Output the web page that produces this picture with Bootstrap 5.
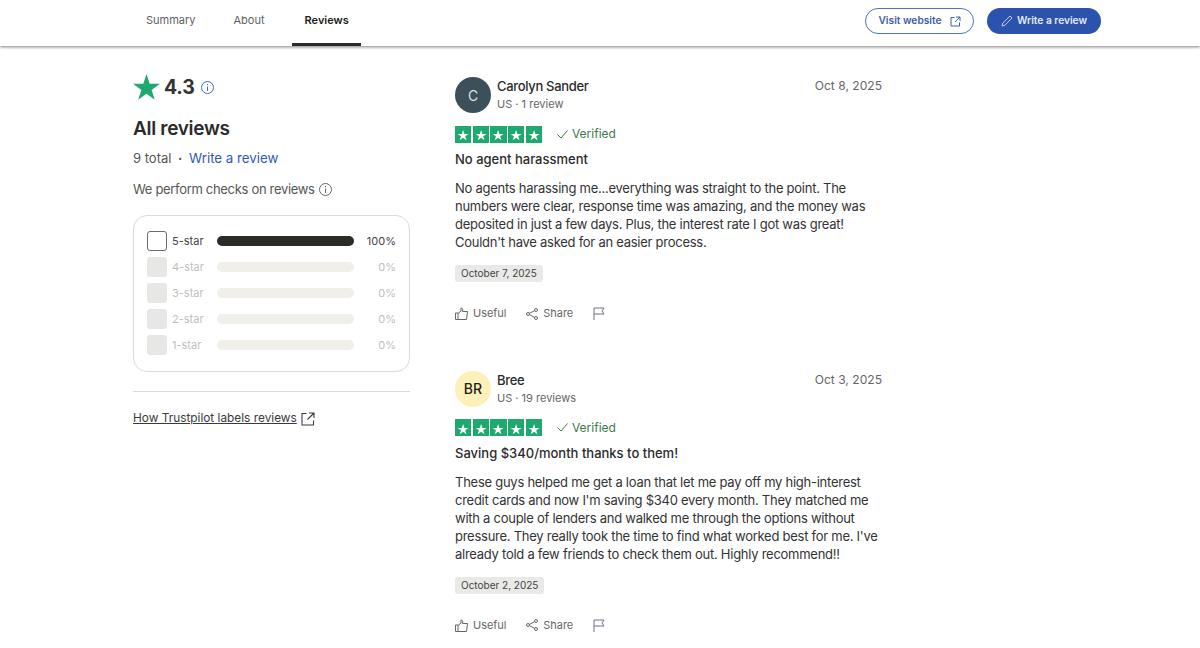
<!DOCTYPE html>
<html lang="en">
<head>
  <meta charset="UTF-8">
  <meta name="viewport" content="width=device-width, initial-scale=1">
  <title>Reviews</title>
  <link href="https://cdn.jsdelivr.net/npm/bootstrap@5.3.3/dist/css/bootstrap.min.css" rel="stylesheet">
  <style>
    html, body { height: 648px; overflow: hidden; }
    body { font-family: Inter, "Liberation Sans", sans-serif; color: #1c1c1c; background: #fff; font-size: 13px; }
    .top-bar { height: 46px; padding-left: 127px; padding-right: 99px; box-shadow: 0 1px 3px rgba(0,0,0,.5); position: relative; }
    .tab-link { height: 46px; padding: 12px 19px 0; color: #5f5f5f; font-size: 11px; text-decoration: none; border-bottom: 3px solid transparent; }
    .tab-link.on { color: #1c1c1c; font-weight: 600; border-bottom-color: #2b2b28; width: 69px; padding-left: 13px; padding-right: 0; margin-left: 8px; }
    .btn-group-top { column-gap: 13px; padding-top: 8px; }
    .pill-btn { height: 26px; border-radius: 13px; font-size: 10.2px; font-weight: 600; padding: 0; }
    .pill-line { width: 109px; color: #3f5ea8; border: 1px solid #4f72c4; background: #fff; }
    .pill-fill { width: 114px; color: #e6ebf7; border: 0; background: #2b53ae; }
    .page-wrap { padding-left: 133px; gap: 45px; }
    .side-col { width: 277px; padding-top: 28px; }
    .rev-col { width: 427px; padding-top: 31px; }
    .score { font-size: 19.5px; font-weight: 700; line-height: 24px; color: #333; letter-spacing: -.2px; }
    .info-mark { margin-left: 6px; }
    .side-title { font-size: 19px; font-weight: 600; line-height: 24px; margin-top: 17px; color: #2b2b2b; letter-spacing: -.3px; }
    .side-line { font-size: 13px; line-height: 18px; color: #565656; }
    .squeeze { letter-spacing: -.32px; }
    .dot-sep { margin: 0 3px; font-weight: 700; }
    .blue-link { color: #2f5bb7; text-decoration: none; font-size: 13.3px; }
    .filter-box { height: 157px; border: 1px solid #dcdbd5; border-radius: 14px; padding: 15px 13px 0; margin-top: 17px; }
    .filter-row { height: 20px; margin-bottom: 6px; font-size: 11px; color: #c0c0c0; }
    .filter-row.on { color: #444; }
    .tick { width: 20px; height: 20px; border-radius: 3px; background: #e7e7e5; flex: none; }
    .filter-row.on .tick { background: #fff; border: 1px solid #6b6b6b; }
    .star-name { width: 45px; margin-left: 5px; }
    .bar-track { width: 137px; height: 10px; border-radius: 5px; background: #f1efea; }
    .filter-row.on .bar-track { background: #2b2b28; }
    .bar-pct { width: 42px; text-align: right; }
    .side-rule { border-top: 1px solid #dcdbd5; margin-top: 19px; }
    .labels-link { color: #3a3a3a; font-size: 11.85px; margin-top: 18px; }
    .labels-link a { color: inherit; }
    .avatar-round { width: 36px; height: 36px; border-radius: 50%; font-size: 14px; flex: none; }
    .av-dark { background: #3c5059; color: #d9e0e3; }
    .av-sand { background: #fdf0b8; color: #1c1c1c; font-weight: 500; }
    .who-wrap { column-gap: 6px; }
    .rev-name { font-size: 13px; line-height: 18px; font-weight: 500; color: #2b2b2b; letter-spacing: -.32px; }
    .rev-meta { font-size: 11px; line-height: 18px; color: #666; }
    .rev-date { font-size: 12.1px; color: #666; line-height: 16px; padding-top: 1px; }
    .star-strip { gap: 1.5px; }
    .star-cell { width: 16.2px; height: 17px; background: #1eaa6e; flex: none; }
    .ok-tag { color: #3a7a4c; font-size: 12px; margin-left: 15px; column-gap: 4px; }
    .rev-title { font-size: 13px; line-height: 18px; font-weight: 500; color: #2b2b2b; margin-top: 7px; }
    .rev-body { font-size: 13px; line-height: 18px; color: #333; margin-top: 11px; letter-spacing: -.26px; }
    .date-chip { font-size: 10px; line-height: 17px; background: #e9e9e7; color: #444; border-radius: 3px; padding: 0 6px; margin-top: 14px; }
    .act-row { font-size: 11px; color: #666; margin-top: 21px; height: 20px; letter-spacing: -.05px; }
    .act-row span { margin-left: 5px; }
    .rev-item { margin-bottom: 47px; }
  </style>
</head>
<body>

<!-- tabs -->
<nav class="top-bar d-flex justify-content-between align-items-start">
  <div class="d-flex">
    <a class="tab-link" href="#">Summary</a>
    <a class="tab-link" href="#">About</a>
    <a class="tab-link on" href="#">Reviews</a>
  </div>
  <div class="btn-group-top d-flex">
    <button class="pill-btn pill-line d-flex align-items-center justify-content-center gap-2">Visit website
      <svg width="11" height="11" viewBox="0 0 11 11" fill="none" stroke="#3f5ea8" stroke-width="1"><path d="M4.5 1.5H1v8.5h8.5V6.5M6 1h4v4M10 1 5 6"/></svg>
    </button>
    <button class="pill-btn pill-fill d-flex align-items-center justify-content-center gap-1">
      <svg width="12" height="12" viewBox="0 0 12 12" fill="none" stroke="#c3cde8" stroke-width="1"><path d="M1 11l.8-3L9 1l2 2-7 7.2z"/></svg>
      Write a review
    </button>
  </div>
</nav>

<main class="page-wrap d-flex">
  <!-- left column -->
  <aside class="side-col">
    <div class="d-flex align-items-center">
      <svg width="27" height="26" viewBox="0 0 28 27"><path fill="#1eaa6e" d="M14 0l3.3 10.2H28l-8.7 6.3 3.3 10.3-8.6-6.4-8.7 6.4 3.4-10.3L0 10.2h10.7z"/></svg>
      <span class="score ms-1">4.3</span>
      <svg class="info-mark" width="13" height="13" viewBox="0 0 13 13" fill="none" stroke="#3f68c4"><circle cx="6.5" cy="6.5" r="6"/><path d="M6.5 5.5v4.5M6.5 3v1.200"/></svg>
    </div>
    <div class="side-title">All reviews</div>
    <div class="side-line mt-2">9 total <span class="dot-sep">·</span> <a class="blue-link" href="#">Write a review</a></div>
    <div class="side-line squeeze d-flex align-items-center" style="margin-top:13px">We perform checks on reviews
      <svg class="ms-1" width="13" height="13" viewBox="0 0 13 13" fill="none" stroke="#666"><circle cx="6.5" cy="6.5" r="6"/><path d="M6.5 5.5v4.5M6.5 3v1.200"/></svg>
    </div>
    <div class="filter-box">
      <div class="filter-row on d-flex align-items-center"><div class="tick"></div><div class="star-name">5-star</div><div class="bar-track"></div><div class="bar-pct">100%</div></div>
      <div class="filter-row d-flex align-items-center"><div class="tick"></div><div class="star-name">4-star</div><div class="bar-track"></div><div class="bar-pct">0%</div></div>
      <div class="filter-row d-flex align-items-center"><div class="tick"></div><div class="star-name">3-star</div><div class="bar-track"></div><div class="bar-pct">0%</div></div>
      <div class="filter-row d-flex align-items-center"><div class="tick"></div><div class="star-name">2-star</div><div class="bar-track"></div><div class="bar-pct">0%</div></div>
      <div class="filter-row d-flex align-items-center"><div class="tick"></div><div class="star-name">1-star</div><div class="bar-track"></div><div class="bar-pct">0%</div></div>
    </div>
    <div class="side-rule"></div>
    <div class="labels-link d-flex align-items-center gap-1"><a href="#">How Trustpilot labels reviews</a>
      <svg width="14" height="14" viewBox="0 0 14 14" fill="none" stroke="#3a3a3a" stroke-width="1.1"><path d="M5.5 1.5H1v11.500h11.500V8.5M8 1h5v5M13 1 6.5 7.5"/></svg>
    </div>
  </aside>

  <!-- reviews -->
  <section class="rev-col">
    <article class="rev-item">
      <div class="d-flex justify-content-between">
        <div class="who-wrap d-flex align-items-center">
          <div class="avatar-round av-dark d-flex align-items-center justify-content-center">C</div>
          <div><div class="rev-name">Carolyn Sander</div><div class="rev-meta">US · 1 review</div></div>
        </div>
        <div class="rev-date">Oct 8, 2025</div>
      </div>
      <div class="d-flex align-items-center mt-2 pt-1">
        <div class="star-strip d-flex" data-stars></div>
        <div class="ok-tag d-flex align-items-center"><svg width="11" height="9" viewBox="0 0 11 9" fill="none" stroke="#3a7a4c"><path d="M.5 4.5 4 8l6.500-7.500"/></svg><span>Verified</span></div>
      </div>
      <div class="rev-title">No agent harassment</div>
      <div class="rev-body">No agents harassing me...everything was straight to the point. The numbers were clear, response time was amazing, and the money was deposited in just a few days. Plus, the interest rate I got was great! Couldn't have asked for an easier process.</div>
      <span class="date-chip d-inline-block">October 7, 2025</span>
      <div class="act-row d-flex align-items-center" data-acts></div>
    </article>

    <article class="rev-item">
      <div class="d-flex justify-content-between">
        <div class="who-wrap d-flex align-items-center">
          <div class="avatar-round av-sand d-flex align-items-center justify-content-center">BR</div>
          <div><div class="rev-name">Bree</div><div class="rev-meta">US · 19 reviews</div></div>
        </div>
        <div class="rev-date">Oct 3, 2025</div>
      </div>
      <div class="d-flex align-items-center mt-2 pt-1">
        <div class="star-strip d-flex" data-stars></div>
        <div class="ok-tag d-flex align-items-center"><svg width="11" height="9" viewBox="0 0 11 9" fill="none" stroke="#3a7a4c"><path d="M.5 4.5 4 8l6.500-7.500"/></svg><span>Verified</span></div>
      </div>
      <div class="rev-title">Saving $340/month thanks to them!</div>
      <div class="rev-body">These guys helped me get a loan that let me pay off my high-interest credit cards and now I'm saving $340 every month. They matched me with a couple of lenders and walked me through the options without pressure. They really took the time to find what worked best for me. I've already told a few friends to check them out. Highly recommend!!</div>
      <span class="date-chip d-inline-block">October 2, 2025</span>
      <div class="act-row d-flex align-items-center" data-acts></div>
    </article>
  </section>
</main>

<script>
  // same star strip and action row on every review
  const star = '<svg width="16.2" height="17" viewBox="0 0 16 17"><path fill="#fff" d="M8 3l1.300 3.900h4.200L10.100 9.300l1.300 4L8 10.800l-3.400 2.500 1.300-4L2.500 6.900h4.200z"/></svg>';
  document.querySelectorAll("[data-stars]").forEach(el => {
    el.innerHTML = ('<div class="star-cell">' + star + '</div>').repeat(5);
  });
  document.querySelectorAll("[data-acts]").forEach(el => {
    el.innerHTML =
      '<svg width="13" height="13" viewBox="0 0 13 13" fill="none" stroke="#666"><path d="M.5 6h2.500v6.500H.5zM3 6.500 6 4V1c1.500 0 2 1 1.500 3.500h5l-1 8H3"/></svg><span>Useful</span>' +
      '<svg style="margin-left:20px" width="12" height="12" viewBox="0 0 12 12" fill="none" stroke="#666"><circle cx="2" cy="6" r="1.500"/><circle cx="10" cy="2" r="1.500"/><circle cx="10" cy="10" r="1.500"/><path d="M3.400 5.300 8.600 2.700M3.400 6.700l5.200 2.600"/></svg><span>Share</span>' +
      '<svg style="margin-left:20px" width="12" height="13" viewBox="0 0 12 13" fill="none" stroke="#6f7280"><path d="M1 13V1h10L9 4l2 3H1"/></svg>';
  });
</script>
</body>
</html>
